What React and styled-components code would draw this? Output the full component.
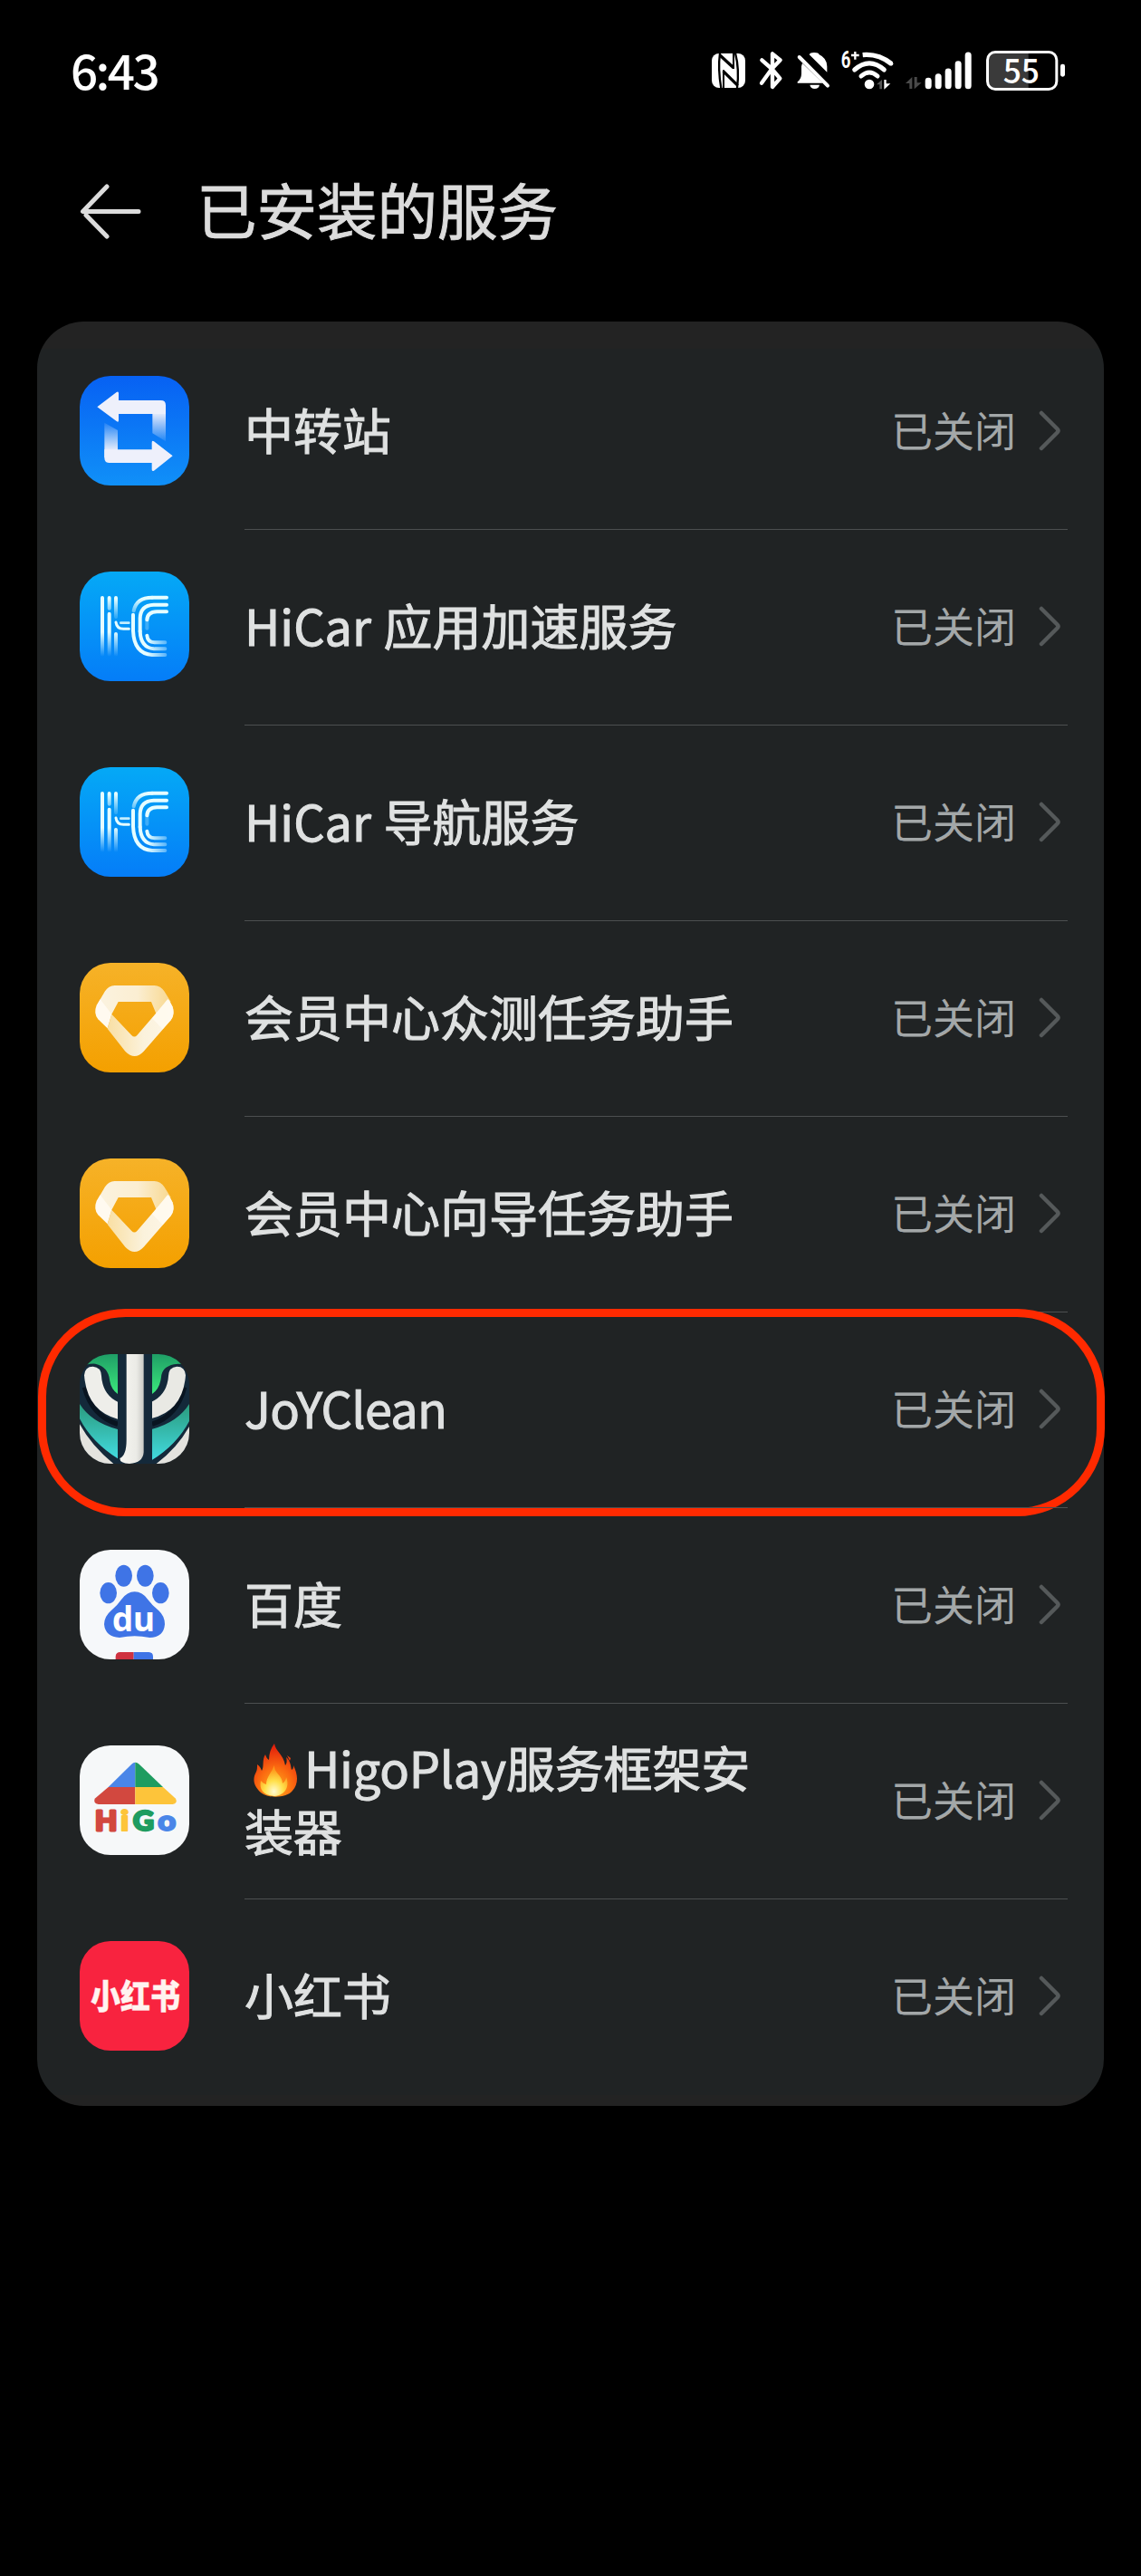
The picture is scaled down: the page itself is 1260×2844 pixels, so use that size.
import React from 'react';
import styled, { createGlobalStyle } from 'styled-components';

const Global = createGlobalStyle`
  html, body { margin: 0; background: #000; }
  * { box-sizing: border-box; }
`;

const Screen = styled.div`
  width: 1260px;
  height: 2844px;
  background: #000;
  color: #dfe1e1;
  font-family: "Noto Sans CJK SC", "Noto Sans", sans-serif;
  display: flex;
  flex-direction: column;
  overflow: hidden;
`;

const StatusBar = styled.header`
  height: 156px;
  padding: 0 80px 0 78px;
  display: flex;
  align-items: center;
  justify-content: space-between;
`;

const Clock = styled.time`
  padding-bottom: 4px;
  font-size: 53px;
  font-weight: 500;
  line-height: 1;
  letter-spacing: -2.6px;
  color: #fff;
`;

const Tray = styled.div`
  display: flex;
`;

const TrayGlyph = styled.svg`
  display: block;
  height: 46px;
  overflow: visible;
`;

const TitleBar = styled.div`
  height: 199px;
  padding: 39px 0 0 88px;
  display: flex;
  align-items: flex-start;
  gap: 61px;
`;

const BackIcon = styled.svg`
  width: 68px;
  height: 78px;
`;

const Title = styled.h1`
  margin: -4px 0 0;
  font-size: 66.5px;
  font-weight: 400;
  line-height: 78px;
  color: #dcdcdc;
  -webkit-text-stroke: 0.9px currentColor;
`;

const Card = styled.ul`
  list-style: none;
  margin: 0 41px;
  padding: 13px 0;
  width: 1178px;
  border-radius: 52px;
  background: linear-gradient(#232323 0 30px, #202324 30px calc(100% - 12px), #232323 0);
`;

const Row = styled.li`
  position: relative;
  height: 216px;
  padding: 0 40px 0 47px;
  display: flex;
  gap: 61px;
`;

const IconTile = styled.svg`
  flex: none;
  margin-top: 47px;
  width: 121px;
  height: 121px;
  border-radius: 34px;
  overflow: hidden;
`;

const RowBody = styled.div`
  flex: 1;
  height: 216px;
  padding-bottom: 4px;
  display: flex;
  align-items: center;
  box-shadow: ${(p) => (p.$divided ? 'inset 0 1px 0 #4c4f50' : 'none')};
`;

const Name = styled.span`
  width: 580px;
  font-size: 54px;
  font-weight: 400;
  line-height: 70px;
  letter-spacing: ${(p) => p.$track || 0}px;
  word-spacing: 1.5px;
  -webkit-text-stroke: 1px currentColor;
`;

const Flame = styled.svg`
  width: 66px;
  height: 60px;
  vertical-align: -11px;
`;

const State = styled.span`
  margin-left: auto;
  padding-bottom: 2px;
  font-size: 46px;
  line-height: 60px;
  color: #a3a7a8;
`;

const Chevron = styled.svg`
  width: 25px;
  height: 46px;
  margin: 3px 7px 0 25px;
`;

const Highlight = styled.div`
  position: absolute;
  left: 1px;
  right: -1px;
  top: -3px;
  height: 229px;
  border: 9px solid #ff2a00;
  border-radius: 97px;
  pointer-events: none;
`;

function Glyph({ x, w, children }) {
  return (
    <TrayGlyph viewBox={`${x} 75 ${w} 138`} style={{ width: w / 3 }} fill="#fff">
      {children}
    </TrayGlyph>
  );
}

function StatusIcons() {
  const line = { fill: 'none', stroke: '#fff', strokeLinecap: 'round' };
  return (
    <Tray>
      <Glyph x={75} w={135}>
        <rect x="78" y="87" width="111" height="114" rx="24" />
        <g fill="none" stroke="#000">
          <path d="M105 86Q98 140 109 202" strokeWidth="7" />
          <path d="M156 86Q170 140 162 202" strokeWidth="7" />
          <path d="M105 93L150 134" strokeWidth="10" />
          <path d="M116 146L164 193" strokeWidth="10" />
          <path d="M117 142V202M150 86V138" strokeWidth="6" />
        </g>
      </Glyph>
      <Glyph x={210} w={125}>
        <path {...line} strokeWidth="13" strokeLinejoin="round" d="M244 109L277 138L305 109L279 88V126M277 138L243 185M277 138L304 170L279 198V154" />
      </Glyph>
      <Glyph x={335} w={155}>
        <path d="M400 91Q403 84 416 84Q431 84 433 91Q458 102 459 130V149Z" />
        <path d="M377 119L445 185H361V181Q374 172 374 154V130Z" />
        <path {...line} strokeWidth="12" d="M367 99L461 194" />
        <path d="M402 191H434Q431 204 418 204Q405 204 402 191Z" />
      </Glyph>
      <Glyph x={490} w={210}>
        <text x="507" y="136" fontSize="78" fontWeight="700" textLength="32" lengthAdjust="spacingAndGlyphs" fontFamily="Roboto, sans-serif">6</text>
        <path d="M541 93H567M554 81V107" stroke="#fff" strokeWidth="7" />
        <path {...line} strokeLinecap="butt" strokeWidth="16" d="M579 92Q630 87 674 121" />
        <circle cx="673" cy="121" r="7" />
        <path {...line} strokeWidth="15" d="M552 141Q601 98 650 141M574 162Q601 138 628 162" />
        <circle cx="601" cy="189" r="16" />
        <path d="M625 190L643 174V205H635V190Z" fill="#555" />
        <path d="M650 174H657V187H671L650 206Z" />
      </Glyph>
      <Glyph x={700} w={260}>
        <path d="M721 186L743 165V204H734V186Z" fill="#4a4a4a" />
        <path d="M750 165H759V184H774L750 205Z" fill="#4a4a4a" />
        <path {...line} strokeWidth="21" d="M796.500 178V194M829.500 164V194M862.500 147V194M895.500 122V194M928.500 93V194" />
      </Glyph>
      <Glyph x={960} w={300}>
        <path d="M1018 87H1127V201H1018Q995 201 995 178V110Q995 87 1018 87Z" fill="#3a3a3a" />
        <rect x="991.500" y="82.500" width="229" height="123" rx="26" fill="none" stroke="#fff" strokeWidth="9" />
        <rect x="1233" y="122" width="15" height="42" rx="7" />
        <text x="1043" y="186" fontSize="112" fontWeight="500" textLength="121" lengthAdjust="spacingAndGlyphs" fontFamily="Noto Sans CJK SC, sans-serif">55</text>
      </Glyph>
    </Tray>
  );
}

function TransferIcon() {
  return (
    <IconTile viewBox="0 0 363 363">
      <defs>
        <linearGradient id="tBg" x1="0" y1="0" x2="0" y2="1"><stop stopColor="#0761f3" /><stop offset="1" stopColor="#1090f8" /></linearGradient>
        <linearGradient id="tA" gradientUnits="userSpaceOnUse" x1="0" y1="120" x2="0" y2="215"><stop stopColor="#eef0fb" /><stop offset="1" stopColor="#eef0fb" stopOpacity="0.1" /></linearGradient>
        <linearGradient id="tB" gradientUnits="userSpaceOnUse" x1="0" y1="250" x2="0" y2="155"><stop stopColor="#eef0fb" /><stop offset="1" stopColor="#eef0fb" stopOpacity="0.1" /></linearGradient>
      </defs>
      <rect width="363" height="363" fill="url(#tBg)" />
      <path d="M241 100H285V217L241 190Z" fill="url(#tA)" />
      <path d="M58 103L122 54Q129 50 129 58V81H269Q285 81 285 97V126H129V147Q129 155 122 150Z" fill="#eef0fb" />
      <path d="M82 270V155L126 180V270Z" fill="url(#tB)" />
      <path d="M308 265L246 314Q239 318 239 310V288H98Q82 288 82 272V244H239V221Q239 212 246 217Z" fill="#eef0fb" />
    </IconTile>
  );
}

function HiCarIcon() {
  return (
    <IconTile viewBox="0 0 363 363">
      <defs>
        <linearGradient id="hBg" x1="0" y1="0" x2="0" y2="1"><stop stopColor="#05a9f6" /><stop offset="1" stopColor="#057df8" /></linearGradient>
        <linearGradient id="hDown" gradientUnits="userSpaceOnUse" x1="0" y1="200" x2="0" y2="282"><stop stopColor="#e6fdff" /><stop offset="1" stopColor="#e6fdff" stopOpacity="0" /></linearGradient>
        <linearGradient id="hTop" gradientUnits="userSpaceOnUse" x1="0" y1="90" x2="0" y2="150"><stop stopColor="#e6fdff" /><stop offset="1" stopColor="#e6fdff" stopOpacity="0.2" /></linearGradient>
        <linearGradient id="hOut" gradientUnits="userSpaceOnUse" x1="225" y1="0" x2="290" y2="0"><stop stopColor="#e6fdff" /><stop offset="1" stopColor="#e6fdff" stopOpacity="0.35" /></linearGradient>
      </defs>
      <rect width="363" height="363" fill="url(#hBg)" />
      <g fill="none" strokeWidth="12" strokeLinecap="round" stroke="url(#hDown)">
        <path d="M75 87L75.100 276M98 140L98.100 276M120 207L120.100 276" />
        <path stroke="url(#hTop)" d="M98 87L98.100 122M120 87L120.100 150" />
        <path stroke="#e6fdff" strokeWidth="9" d="M120 168Q123 190 145 190H163" />
        <path stroke="#e6fdff" strokeWidth="8" strokeOpacity="0.85" d="M136 170H163" />
        <path stroke="url(#hTop)" d="M240 86Q188 86 179 130" />
        <path stroke="#e6fdff" d="M288 86H240M288 110H245Q201 112 200 155V198M288 133H256Q224 134 223 160" />
        <path stroke="#e6fdff" strokeOpacity="0.25" d="M223 160V188" />
        <path stroke="url(#hOut)" d="M177 143V196Q180 272 240 276H283M200 198Q202 252 246 256M250 256H283M223 212Q225 234 248 235H283" />
      </g>
    </IconTile>
  );
}

function MemberIcon() {
  return (
    <IconTile viewBox="0 0 363 363">
      <defs>
        <linearGradient id="mBg" x1="0" y1="0" x2="0" y2="1"><stop stopColor="#f6b228" /><stop offset="1" stopColor="#f4a000" /></linearGradient>
        <linearGradient id="mTop"><stop stopColor="#fbf3e0" /><stop offset="0.55" stopColor="#fbeed2" /><stop offset="1" stopColor="#f8d88f" /></linearGradient>
        <linearGradient id="mLow"><stop stopColor="#f9dfa3" /><stop offset="0.55" stopColor="#fbf2dc" /><stop offset="1" stopColor="#fdf6e8" /></linearGradient>
      </defs>
      <rect width="363" height="363" fill="url(#mBg)" />
      <path d="M116 75H247Q269 76 280 94L302 129L254 170L237 129H128L106 170L60 150Q54 144 65 126L84 94Q95 76 116 75Z" fill="url(#mTop)" />
      <path d="M92 218L106 170L172 240Q181 249 190 240L283 132Q292 118 296 124Q322 165 302 190L212 293Q182 325 151 293Z" fill="url(#mLow)" />
      <path d="M68 121L106 170L92 217L61 187Q45 167 56 140Z" fill="#fffaf0" />
      <path d="M292 119L308 145Q316 168 302 190L275 220L240 184Z" fill="#fffaf0" opacity="0.85" />
    </IconTile>
  );
}

function JoyIcon() {
  return (
    <IconTile viewBox="0 0 363 363">
      <defs>
        <linearGradient id="jG" x1="0" y1="0" x2="0" y2="1"><stop stopColor="#1f9e66" /><stop offset="1" stopColor="#3be87c" /></linearGradient>
        <linearGradient id="jT" x1="0" y1="0" x2="0" y2="1"><stop stopColor="#2a9a7c" /><stop offset="1" stopColor="#42dbe0" /></linearGradient>
        <linearGradient id="jW"><stop stopColor="#f6f6f2" /><stop offset="0.7" stopColor="#ebebe6" /><stop offset="1" stopColor="#c9cac6" /></linearGradient>
      </defs>
      <rect width="363" height="363" fill="#14293a" />
      <path d="M60 0H126V132Q103 116 99 84Q94 42 52 32Q24 30 0 46Q26 8 60 0Z" fill="url(#jG)" />
      <path d="M240 0H305Q345 12 363 48Q345 28 312 34Q273 42 270 76Q265 116 240 132Z" fill="url(#jG)" />
      <path d="M0 165Q38 226 126 249V346Q40 292 0 214Z" fill="url(#jT)" />
      <path d="M363 165Q325 226 238 249V352Q322 300 363 222Z" fill="url(#jT)" />
      <path d="M0 232Q40 305 112 363H0Z" fill="#e4e3de" />
      <path d="M363 240Q322 312 254 363H363Z" fill="#e4e3de" />
      <path d="M16 110Q40 205 126 232M347 110Q323 205 240 232" fill="none" stroke="#081420" strokeWidth="16" />
      <path d="M15 70Q17 41 44 41Q71 43 72 72Q76 134 126 158V215Q24 188 15 70Z" fill="#eeeeea" />
      <path d="M351 70Q349 41 322 41Q295 43 294 72Q290 134 238 158V213Q342 188 351 70Z" fill="#e9e9e4" />
      <rect x="126" y="0" width="114" height="363" fill="#14293a" />
      <path d="M155 0H212V325Q210 360 165 363Q132 362 133 345Q155 335 155 285Z" fill="url(#jW)" />
    </IconTile>
  );
}

function BaiduIcon() {
  return (
    <IconTile viewBox="0 0 363 363">
      <rect width="363" height="363" fill="#f6f8fa" />
      <g fill="#3f74e6">
        <ellipse cx="146" cy="86" rx="28" ry="36" />
        <ellipse cx="217" cy="86" rx="28" ry="36" />
        <ellipse cx="95" cy="143" rx="28" ry="35" />
        <ellipse cx="268" cy="143" rx="28" ry="35" />
        <path d="M182 139Q208 139 226 165Q240 184 262 202Q282 220 282 247Q278 291 232 291Q206 287 182 286Q158 287 132 291Q85 289 81 247Q82 220 104 202Q125 184 138 165Q157 139 182 139Z" />
      </g>
      <text x="107" y="269" fontSize="114" fontWeight="700" fontFamily="Noto Sans, sans-serif" fill="#fff" textLength="142" lengthAdjust="spacingAndGlyphs">du</text>
      <path d="M179 339V363H119V353Q120 339 134 339Z" fill="#cf3340" />
      <path d="M179 339H229Q243 340 243 353V363H179Z" fill="#3f74e6" />
    </IconTile>
  );
}

function HigoIcon() {
  const letter = { fontSize: 90, fontWeight: 900, fontFamily: 'Lato, sans-serif', strokeWidth: 9, strokeLinejoin: 'round', lengthAdjust: 'spacingAndGlyphs' };
  return (
    <IconTile viewBox="0 0 363 363">
      <rect width="363" height="363" fill="#f6f8f9" />
      <path d="M184 56Q178 56 172 62L95 138H184Z" fill="#4a86e8" />
      <path d="M184 56Q190 56 197 62L276 138H184Z" fill="#1e9c60" />
      <path d="M95 138H184V195H62Q44 192 50 176Z" fill="#d2483f" />
      <path d="M184 138H276L318 176Q326 191 308 195H184Z" fill="#fdc43a" />
      <text {...letter} x="51" y="282" textLength="73" fill="#d2483f" stroke="#d2483f">H</text>
      <text {...letter} x="135" y="282" textLength="28" strokeWidth="6" fill="#fdc43a" stroke="#fdc43a">i</text>
      <text {...letter} x="176" y="282" textLength="70" strokeWidth="7" fill="#1e9c60" stroke="#1e9c60">G</text>
      <text {...letter} x="259" y="282" textLength="60" strokeWidth="6" fill="#4a86e8" stroke="#4a86e8">o</text>
    </IconTile>
  );
}

function RednoteIcon() {
  return (
    <IconTile viewBox="0 0 121 121">
      <rect width="121" height="121" fill="#f8233f" />
      <text x="12" y="74.500" fontSize="37" fontWeight="900" fontFamily="Noto Sans CJK SC, sans-serif" fill="#fff3f0" stroke="#fff3f0" strokeWidth="0.400" textLength="99" lengthAdjust="spacingAndGlyphs">小红书</text>
    </IconTile>
  );
}

function FlameIcon() {
  return (
    <Flame viewBox="0 0 66 60" aria-hidden="true">
      <defs>
        <radialGradient id="fO" cx="0.5" cy="0.85" r="0.8"><stop stopColor="#ffb01e" /><stop offset="0.5" stopColor="#fb6a10" /><stop offset="1" stopColor="#e3200c" /></radialGradient>
        <radialGradient id="fI" cx="0.5" cy="0.85" r="0.7"><stop stopColor="#fffbd0" /><stop offset="0.5" stopColor="#ffe04a" /><stop offset="1" stopColor="#fd9a1c" /></radialGradient>
      </defs>
      <path d="M33 0C34 8 43 12 45 24C47 22 47 18 46 15C51 19 51 25 52 29C54 28 54 26 54 24C59 34 60 44 53 52C47 60 26 61 18 54C9 46 9 38 13 31C14 29 14 26 14 23C17 25 18 27 19 30C22 26 19 18 23 12C24 15 25 17 27 18C27 11 29 5 33 0Z" fill="url(#fO)" />
      <path d="M33 24C32 32 42 35 42 44C45 42 46 39 46 37C50 46 46 57 33 58C20 57 16 50 18 41C20 43 21 44 24 45C24 37 30 32 33 24Z" fill="url(#fI)" />
      <path d="M47 13L51 16L50 19Z" fill="#e8400f" />
    </Flame>
  );
}

const services = [
  { Icon: TransferIcon, name: '中转站', track: -0.1 },
  { Icon: HiCarIcon, name: 'HiCar 应用加速服务' },
  { Icon: HiCarIcon, name: 'HiCar 导航服务' },
  { Icon: MemberIcon, name: '会员中心众测任务助手' },
  { Icon: MemberIcon, name: '会员中心向导任务助手' },
  { Icon: JoyIcon, name: 'JoYClean', track: -0.7, highlighted: true },
  { Icon: BaiduIcon, name: '百度' },
  { Icon: HigoIcon, flame: true, name: 'HigoPlay服务框架安装器', track: -0.2 },
  { Icon: RednoteIcon, name: '小红书', track: -0.1 },
];

export default function App() {
  return (
    <Screen>
      <Global />
      <StatusBar>
        <Clock>6:43</Clock>
        <StatusIcons />
      </StatusBar>
      <TitleBar>
        <BackIcon viewBox="0 0 68 78" fill="none" stroke="#dcdcdc" strokeWidth="5" strokeLinecap="round" strokeLinejoin="round">
          <path d="M30 11L3.500 38.500H65M7 42.500L30 66" />
        </BackIcon>
        <Title>已安装的服务</Title>
      </TitleBar>
      <Card>
        {services.map(({ Icon, name, track, flame, highlighted }, i) => (
          <Row key={i}>
            <Icon />
            <RowBody $divided={i > 0}>
              <Name $track={track}>
                {flame && <FlameIcon />}
                {name}
              </Name>
              <State>已关闭</State>
              <Chevron viewBox="0 0 25 46" fill="none" stroke="#55595a" strokeWidth="4.500" strokeLinecap="round" strokeLinejoin="round">
                <path d="M3 3L20.500 20.500Q22.500 22.500 20.500 24.500L3 42" />
              </Chevron>
            </RowBody>
            {highlighted && <Highlight />}
          </Row>
        ))}
      </Card>
    </Screen>
  );
}
